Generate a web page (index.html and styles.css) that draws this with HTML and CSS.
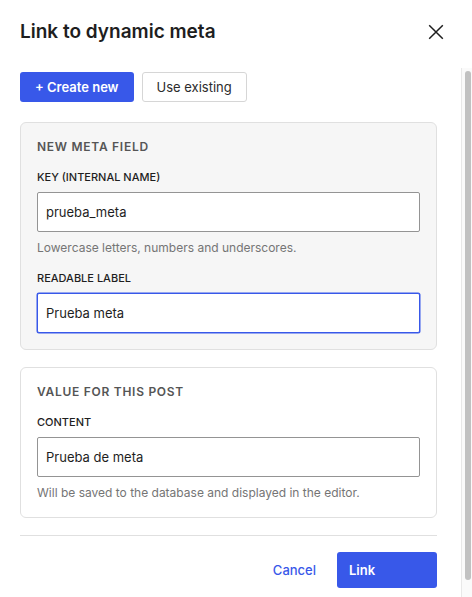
FILE: index.html
```html
<!DOCTYPE html>
<html lang="en">
<head>
    <meta charset="UTF-8">
    <meta name="viewport" content="width=device-width, initial-scale=1.0">
    <title>Link to dynamic meta</title>
    <link rel="stylesheet" href="styles.css">
</head>
<body>
    <div class="modal">
        <div class="modal-header">
            <h1 class="modal-title">Link to dynamic meta</h1>
            <button class="close-button" aria-label="Close">
                <svg width="16" height="16" viewBox="0 0 16 16">
                    <path d="M1.2 1.2L14.8 14.8M14.8 1.2L1.2 14.8" stroke="#1e1e1e" stroke-width="1.5" fill="none"/>
                </svg>
            </button>
        </div>

        <div class="modal-body">
            <div class="tabs">
                <button class="btn btn-primary">+ Create new</button>
                <button class="btn btn-secondary">Use existing</button>
            </div>

            <div class="card card-muted">
                <h2 class="card-title">New meta field</h2>
                <div class="field">
                    <label class="field-label" for="meta-key">Key (internal name)</label>
                    <input class="field-input" id="meta-key" type="text" value="prueba_meta">
                    <p class="field-help">Lowercase letters, numbers and underscores.</p>
                </div>
                <div class="field">
                    <label class="field-label" for="meta-label">Readable label</label>
                    <input class="field-input is-focused" id="meta-label" type="text" value="Prueba meta">
                </div>
            </div>

            <div class="card">
                <h2 class="card-title">Value for this post</h2>
                <div class="field">
                    <label class="field-label" for="meta-content">Content</label>
                    <input class="field-input" id="meta-content" type="text" value="Prueba de meta">
                    <p class="field-help">Will be saved to the database and displayed in the editor.</p>
                </div>
            </div>

            <div class="modal-footer">
                <button class="btn-link">Cancel</button>
                <button class="btn btn-primary btn-large">Link</button>
            </div>
        </div>

        <!-- scroll track drawn over the body's right edge -->
        <div class="scrollbar">
            <div class="scrollbar-thumb"></div>
        </div>
    </div>
</body>
</html>
```

FILE: styles.css
```css
* {
    margin: 0;
    padding: 0;
    box-sizing: border-box;
}
body {
    font-family: Inter, "Noto Sans", sans-serif;
    color: #1e1e1e;
    background: #fff;
    height: 100vh;
    overflow: hidden;
}
.modal {
    position: relative;
    display: flex;
    flex-direction: column;
    height: 100vh;
}
.modal-header {
    flex-shrink: 0;
    height: 68px;
    padding: 0 20px 5px 20px;
    display: flex;
    align-items: center;
    justify-content: space-between;
}
.modal-title {
    font-size: 19px;
    font-weight: 600;
    line-height: 28px;
}
.close-button {
    width: 32px;
    height: 32px;
    border: none;
    background: none;
    display: flex;
    align-items: center;
    justify-content: center;
    cursor: pointer;
}
.modal-body {
    flex: 1;
    overflow: hidden;
    padding: 4px 35px 28px 20px;
}
.scrollbar {
    position: absolute;
    top: 68px;
    right: 0;
    bottom: 0;
    width: 11px;
    background: #fafafa;
    border-left: 1px solid #e8e8e8;
    padding: 3px 1px 0 3px;
}
.scrollbar-thumb {
    height: 509px;
    background: #c1c1c1;
    border-radius: 4px;
}
.tabs {
    display: flex;
    gap: 8px;
}
.btn {
    height: 30px;
    padding: 0 15px;
    border-radius: 3px;
    font-family: inherit;
    font-size: 13px;
    cursor: pointer;
}
.btn-primary {
    background: #3858e9;
    color: #fff;
    border: none;
    font-weight: 600;
}
.btn-secondary {
    padding: 0 14px;
    background: #fff;
    color: #2c2c2c;
    border: 1px solid #d6d6d6;
}
.card {
    margin-top: 17px;
    border: 1px solid #e0e0e0;
    border-radius: 6px;
    padding: 16px;
}
.card-muted {
    margin-top: 20px;
    background: #f6f6f6;
}
.card-title {
    font-size: 12px;
    line-height: 16px;
    font-weight: 600;
    letter-spacing: 0.06em;
    text-transform: uppercase;
    color: #555;
}
.field {
    margin-top: 14px;
}
.field-label {
    display: block;
    font-size: 11px;
    line-height: 16px;
    font-weight: 500;
    text-transform: uppercase;
    margin-bottom: 7px;
}
.field-input {
    display: block;
    width: 100%;
    height: 40px;
    padding: 0 8px;
    border: 1px solid #949494;
    border-radius: 2px;
    background: #fff;
    font-family: inherit;
    font-size: 13px;
    color: #1e1e1e;
    outline: none;
}
.field-input.is-focused {
    border-color: #3858e9;
    box-shadow: 0 0 0 0.5px #3858e9;
}
.field-help {
    margin-top: 8px;
    font-size: 12px;
    line-height: 16px;
    color: #757575;
}
.modal-footer {
    margin-top: 17px;
    border-top: 1px solid #e0e0e0;
    padding-top: 16px;
    display: flex;
    justify-content: flex-end;
    align-items: center;
    gap: 9px;
}
.btn-link {
    height: 36px;
    padding: 0 12px;
    border: none;
    background: none;
    color: #3858e9;
    font-family: inherit;
    font-size: 13px;
    font-weight: 500;
    cursor: pointer;
}
.btn-large {
    height: 36px;
    width: 100px;
    padding: 0 12px;
    text-align: left;
    font-size: 13px;
}
```
